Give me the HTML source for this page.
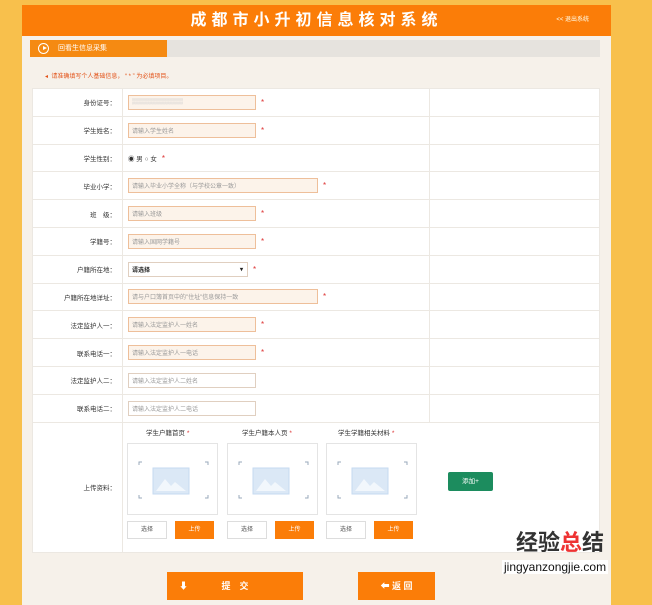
<!DOCTYPE html><html><head><meta charset="utf-8"><style>
*{margin:0;padding:0;box-sizing:border-box}
body{width:652px;height:605px;overflow:hidden;background:#f8c04c;font-family:"Liberation Sans","Noto Sans CJK SC",sans-serif;position:relative}
.abs{position:absolute}
#panel{left:22px;top:5px;width:589px;height:600px;background:#f6f1ea}
#hdr{left:22px;top:5px;width:589px;height:31px;background:#fb7d08;color:#fff;font-size:16px;font-weight:bold;letter-spacing:5px;text-align:center;line-height:31px}
#exit{right:22px;top:0;font-size:6px;color:#ffe;position:absolute;letter-spacing:0;font-weight:normal}
.tab{left:30px;top:40px;width:137px;height:17px;background:#f58a12;color:#fff;font-size:7px;line-height:17px;padding-left:28px}
.gray{left:167px;top:40px;width:433px;height:17px;background:#e6e3de}
.note{left:45px;top:71px;font-size:6px;color:#e3541a}
table{position:absolute;left:32px;top:88px;width:568px;border-collapse:collapse;background:#fff}
td{border:1px solid #ece8e2;font-size:6.5px;color:#333;height:27.8px;padding:0}
td.l{width:90px;text-align:right;padding-right:6px}
td.r{width:170px}
.in{display:inline-flex;align-items:center;vertical-align:middle;width:128px;height:15px;border:1px solid #eebf9a;background:#fcf3ea;margin-left:5px;font-size:6px;color:#999;padding-left:3px;overflow:hidden;white-space:nowrap}
.in.w{width:190px}.in.n{background:#fff;border-color:#e0cfc0}
.s{color:#d33;font-size:8px;margin-left:5px;vertical-align:middle}
.btn{background:#fb7d08;color:#fff;font-size:9px;font-weight:bold;text-align:center;line-height:28px}
.box{width:91px;height:72px;border:1px solid #e4e4e4;display:inline-block;position:absolute;background:#fff}
.sel{position:absolute;width:40px;height:18px;border:1px solid #ddd;font-size:6px;text-align:center;line-height:16px;color:#555;background:#fff}
.up{position:absolute;width:39px;height:18px;background:#fb7d08;font-size:6px;text-align:center;line-height:18px;color:#fff}
.cap{position:absolute;font-size:6.5px;color:#333}
</style></head><body>
<div id="panel" class="abs"></div>
<div id="hdr" class="abs">成都市小升初信息核对系统<span id="exit">&lt;&lt; 退出系统</span></div>
<div class="abs gray"></div>
<div class="abs tab">回看生信息采集</div>
<div class="abs" style="left:38px;top:43px;width:11px;height:11px;border:1.5px solid #fff;border-radius:50%"></div>
<div class="abs" style="left:42.5px;top:46px;border-left:4px solid #fff;border-top:2.5px solid transparent;border-bottom:2.5px solid transparent"></div>
<div class="abs note">◂ &nbsp;请准确填写个人基础信息， “ * ” 为必填项目。</div>
<table>
<tr><td class="l">身份证号：</td><td><span class="in" style="color:#ccc">▒▒▒▒▒▒▒▒▒▒▒▒</span><span class="s">*</span></td><td class="r"></td></tr>
<tr><td class="l">学生姓名：</td><td><span class="in">请输入学生姓名</span><span class="s">*</span></td><td class="r"></td></tr>
<tr><td class="l">学生性别：</td><td><span style="margin-left:5px">◉ 男 ○ 女</span><span class="s">*</span></td><td class="r"></td></tr>
<tr><td class="l">毕业小学：</td><td><span class="in w">请输入毕业小学全称（与学校公章一致）</span><span class="s">*</span></td><td class="r"></td></tr>
<tr><td class="l">班　级：</td><td><span class="in">请输入班级</span><span class="s">*</span></td><td class="r"></td></tr>
<tr><td class="l">学籍号：</td><td><span class="in">请输入国网学籍号</span><span class="s">*</span></td><td class="r"></td></tr>
<tr><td class="l">户籍所在地：</td><td><span class="in n" style="width:120px;color:#222;font-weight:bold">请选择<span style="margin-left:auto;margin-right:4px">▾</span></span><span class="s">*</span></td><td class="r"></td></tr>
<tr><td class="l">户籍所在地详址：</td><td><span class="in w">请与户口簿首页中的"住址"信息保持一致</span><span class="s">*</span></td><td class="r"></td></tr>
<tr><td class="l">法定监护人一：</td><td><span class="in">请输入法定监护人一姓名</span><span class="s">*</span></td><td class="r"></td></tr>
<tr><td class="l">联系电话一：</td><td><span class="in">请输入法定监护人一电话</span><span class="s">*</span></td><td class="r"></td></tr>
<tr><td class="l">法定监护人二：</td><td><span class="in n">请输入法定监护人二姓名</span></td><td class="r"></td></tr>
<tr><td class="l">联系电话二：</td><td><span class="in n">请输入法定监护人二电话</span></td><td class="r"></td></tr>
<tr><td class="l" style="height:130px">上传资料：</td><td colspan="2"></td></tr>
</table>
<div class="cap" style="left:146px;top:427px">学生户籍首页 <span style="color:#d33">*</span></div>
<div class="cap" style="left:242px;top:427px">学生户籍本人页 <span style="color:#d33">*</span></div>
<div class="cap" style="left:338px;top:427px">学生学籍相关材料 <span style="color:#d33">*</span></div>
<div class="box" style="left:127px;top:443px"></div>
<div class="box" style="left:227px;top:443px"></div>
<div class="box" style="left:326px;top:443px"></div>
<svg class="abs" style="left:127px;top:443px" width="300" height="72">
<g id="ic" fill="none" stroke="#9ab" stroke-width="1">
<path d="M12 22v-3h3M78 19h3v3M12 52v3h3M78 55h3v-3"/>
<rect x="26" y="25" width="36" height="26" fill="#dbe8f6" stroke="#c6daf0"/>
<path d="M29 48l9-12 6 7 4-4 11 9z" fill="#f2f7fc" stroke="none"/>
</g>
<use href="#ic" x="100"/><use href="#ic" x="199"/>
</svg>
<div class="sel" style="left:127px;top:521px">选择</div><div class="up" style="left:175px;top:521px">上传</div>
<div class="sel" style="left:227px;top:521px">选择</div><div class="up" style="left:275px;top:521px">上传</div>
<div class="sel" style="left:326px;top:521px">选择</div><div class="up" style="left:374px;top:521px">上传</div>
<div class="abs" style="left:448px;top:472px;width:45px;height:19px;background:#1c8c5e;color:#fff;font-size:6.5px;text-align:center;line-height:19px;border-radius:2px">添加+</div>
<div class="abs btn" style="left:167px;top:572px;width:136px;height:28px"><span style="position:absolute;left:12px">⬇</span>提　交</div>
<div class="abs btn" style="left:358px;top:572px;width:77px;height:28px">⬅ 返 回</div>
<div class="abs" style="left:516px;top:525px;font-size:22px;font-weight:bold;color:#333">经验<span style="color:#e33">总</span>结</div>
<div class="abs" style="left:502px;top:560px;font-size:12px;background:#fff;color:#111;padding:0 2px">jingyanzongjie.com</div>
</body></html>
